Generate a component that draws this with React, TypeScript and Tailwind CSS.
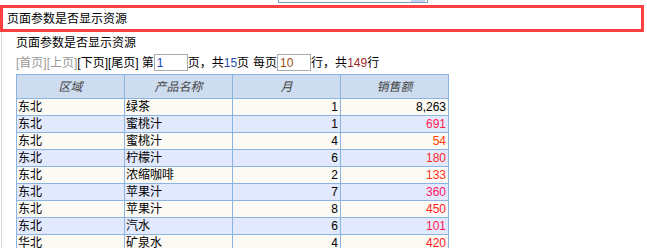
import React from "react";

const rows = [
    { area: "东北", name: "绿茶", month: 1, sales: "8,263", color: "text-[#000000]" },
    { area: "东北", name: "蜜桃汁", month: 1, sales: "691", color: "text-[#ff1a4d]" },
    { area: "东北", name: "蜜桃汁", month: 4, sales: "54", color: "text-[#ff3a00]" },
    { area: "东北", name: "柠檬汁", month: 6, sales: "180", color: "text-[#ff2a2a]" },
    { area: "东北", name: "浓缩咖啡", month: 2, sales: "133", color: "text-[#ff3320]" },
    { area: "东北", name: "苹果汁", month: 7, sales: "360", color: "text-[#ff1464]" },
    { area: "东北", name: "苹果汁", month: 8, sales: "450", color: "text-[#ff2020]" },
    { area: "东北", name: "汽水", month: 6, sales: "101", color: "text-[#ff1450]" },
    { area: "华北", name: "矿泉水", month: 4, sales: "420", color: "text-[#ff2020]" },
];

const font = "font-['Liberation_Sans','Noto_Sans_CJK_SC',sans-serif]";

export default function App() {
    return (
        <div className={`w-[647px] h-[248px] overflow-hidden bg-white text-[12px] text-black ${font}`}>
            {/* bottom edge of a control above */}
            <div className="h-[3px] flex">
                <div className="ml-[278px] w-[150px] h-[3px] border-x border-b border-[#7f9db9] flex justify-end">
                    <div className="w-[14px] h-[2px] bg-[#c3d3f5] mr-[2px]" />
                </div>
            </div>

            <div className="mt-[2px] w-[644px] h-[27px] border-[3px] border-[#ff4040] flex items-center pl-[4px] leading-none">
                页面参数是否显示资源
            </div>

            <div className="ml-[1px] border-l border-[#d6d6d6] pl-[14px] h-[216px]">
                <div className="h-[21px] pt-[5px] leading-[12px]">页面参数是否显示资源</div>

                <div className="h-[19px] flex items-center leading-none">
                    <span className="text-[#999999]">[首页][上页]</span>
                    <span>[下页][尾页]</span>
                    <span className="ml-[3px]">第</span>
                    <div className="w-[34px] h-[17px] border border-[#a5acb2] flex items-center px-[2px] text-[#1a3fc0]">1</div>
                    <span>页，共</span>
                    <span className="text-[#2450b0]">15</span>
                    <span>页</span>
                    <span className="ml-[4px]">每页</span>
                    <div className="w-[34px] h-[17px] border border-[#a5acb2] flex items-center px-[2px] text-[#9a4a10]">10</div>
                    <span>行，共</span>
                    <span className="text-[#a0282a]">149</span>
                    <span>行</span>
                </div>

                <table className="mt-[2px] border-collapse table-fixed w-[433px]">
                    <colgroup>
                        <col className="w-[108px]" />
                        <col className="w-[108px]" />
                        <col className="w-[108px]" />
                        <col className="w-[108px]" />
                    </colgroup>
                    <thead>
                        <tr className="h-[24px] bg-[#cedcf0]">
                            {["区域", "产品名称", "月", "销售额"].map((h) => (
                                <th key={h} className="border border-[#8cb4e2] font-normal italic text-[#444444] text-center p-0">
                                    {h}
                                </th>
                            ))}
                        </tr>
                    </thead>
                    <tbody>
                        {rows.map((r, i) => (
                            <tr key={i} className={`h-[17px] ${i % 2 === 0 ? "bg-[#fbfaf5]" : "bg-[#e3e9fc]"}`}>
                                <td className="border border-[#8cb4e2] px-[1px] py-0 leading-[15px] text-left">{r.area}</td>
                                <td className="border border-[#8cb4e2] px-[1px] py-0 leading-[15px] text-left">{r.name}</td>
                                <td className="border border-[#8cb4e2] px-[2px] py-0 leading-[15px] text-right">{r.month}</td>
                                <td className={`border border-[#8cb4e2] px-[2px] py-0 leading-[15px] text-right ${r.color}`}>{r.sales}</td>
                            </tr>
                        ))}
                    </tbody>
                </table>
            </div>
        </div>
    );
}
